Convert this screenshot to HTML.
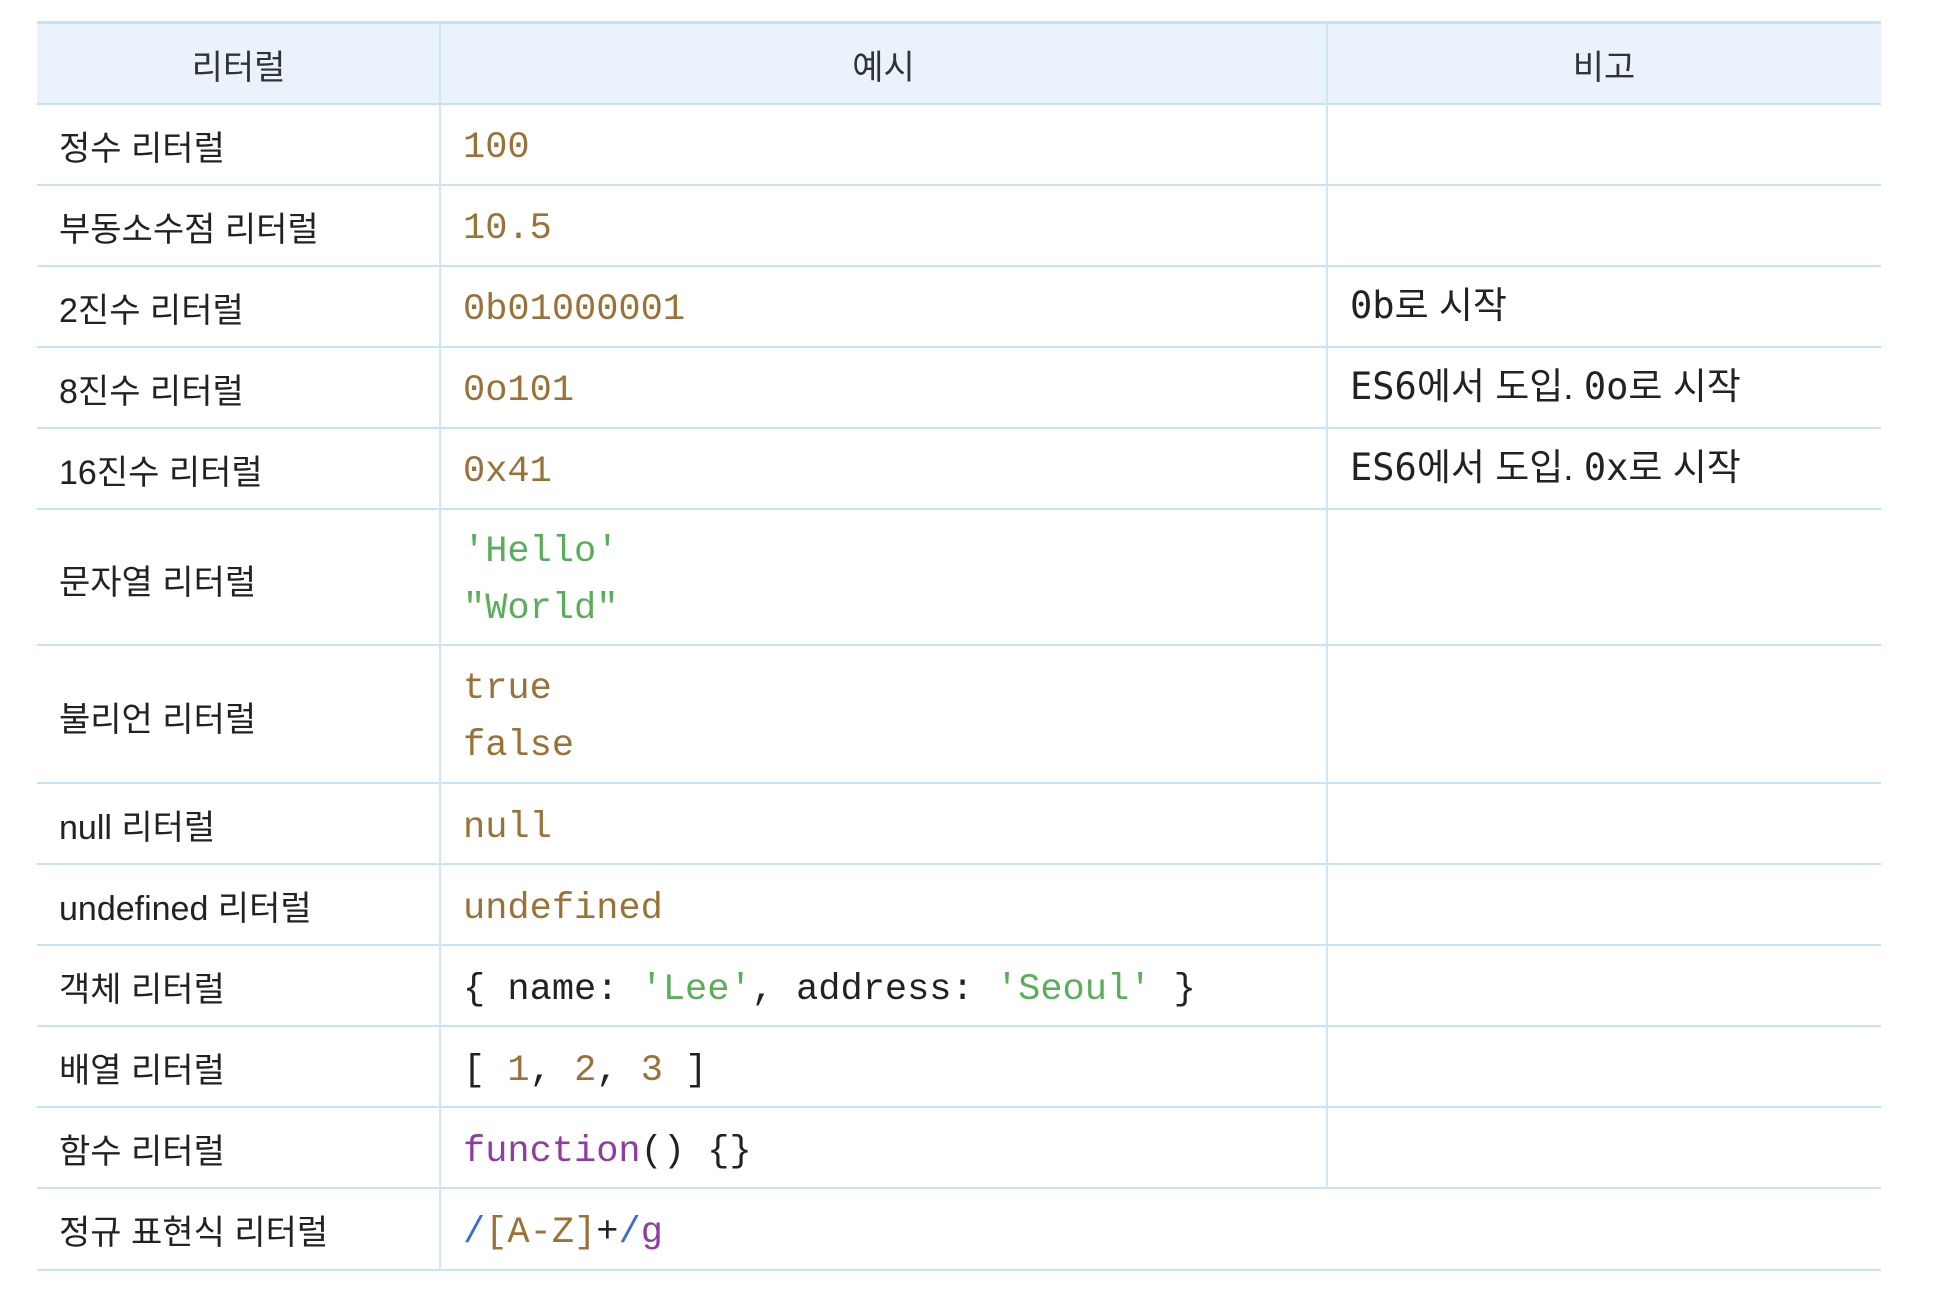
<!DOCTYPE html>
<html><head><meta charset="utf-8"><style>
html,body{margin:0;padding:0;background:#fff;width:1951px;height:1306px;overflow:hidden}
.t{position:absolute;left:37px;top:22px;width:1844px}
.line{position:absolute;left:0;width:1844px;height:2px;background:#c4e3f5}
.v{position:absolute;width:2px;background:#cde7f6}
.c{position:absolute;font-family:"Liberation Sans","Noto Sans CJK KR",sans-serif;font-size:34px;color:#222;white-space:pre;line-height:1.2}
.m{font-family:"Liberation Mono","DejaVu Sans Mono",monospace;font-size:37px}
.n{color:#9a7238}.s{color:#5aad5a}.p{color:#8e3ca0}.b{color:#3c6ecc}.k{color:#222}
.hd{position:absolute;font-family:"Liberation Sans","Noto Sans CJK KR",sans-serif;font-size:34px;color:#333;text-align:center;line-height:1.2}
.r3{font-size:37px}
.dm{font-family:"DejaVu Sans Mono",monospace}
</style></head><body>
<div class="t">
<div style="position:absolute;left:0;top:0;width:1844px;height:82px;background:#eaf3fc"></div>
<div class="line" style="top:-1px;height:3px"></div>
<div class="line" style="top:81px"></div>
<div class="line" style="top:162px"></div>
<div class="line" style="top:243px"></div>
<div class="line" style="top:324px"></div>
<div class="line" style="top:405px"></div>
<div class="line" style="top:486px"></div>
<div class="line" style="top:622px"></div>
<div class="line" style="top:760px"></div>
<div class="line" style="top:841px"></div>
<div class="line" style="top:922px"></div>
<div class="line" style="top:1003px"></div>
<div class="line" style="top:1084px"></div>
<div class="line" style="top:1165px"></div>
<div class="line" style="top:1247px"></div>
<div class="v" style="left:402px;top:0;height:1249px"></div>
<div class="v" style="left:1289px;top:0;height:1167px"></div>

<div class="hd" style="left:0;width:403px;top:26px">리터럴</div>
<div class="hd" style="left:403px;width:887px;top:26px">예시</div>
<div class="hd" style="left:1290px;width:554px;top:26px">비고</div>

<div class="c" style="left:22px;top:107px">정수 리터럴</div>
<div class="c m n" style="left:426px;top:104px">100</div>
<div class="c" style="left:22px;top:188px">부동소수점 리터럴</div>
<div class="c m n" style="left:426px;top:185px">10.5</div>
<div class="c" style="left:22px;top:269px">2진수 리터럴</div>
<div class="c m n" style="left:426px;top:266px">0b01000001</div>
<div class="c r3" style="left:1313px;top:262px"><span class="dm">0b</span>로 시작</div>
<div class="c" style="left:22px;top:350px">8진수 리터럴</div>
<div class="c m n" style="left:426px;top:347px">0o101</div>
<div class="c r3" style="left:1313px;top:343px"><span class="dm">ES6</span>에서 도입. <span class="dm">0o</span>로 시작</div>
<div class="c" style="left:22px;top:431px">16진수 리터럴</div>
<div class="c m n" style="left:426px;top:428px">0x41</div>
<div class="c r3" style="left:1313px;top:424px"><span class="dm">ES6</span>에서 도입. <span class="dm">0x</span>로 시작</div>
<div class="c" style="left:22px;top:541px">문자열 리터럴</div>
<div class="c m s" style="left:426px;top:508px">'Hello'</div>
<div class="c m s" style="left:426px;top:565px">"World"</div>
<div class="c" style="left:22px;top:678px">불리언 리터럴</div>
<div class="c m n" style="left:426px;top:645px">true</div>
<div class="c m n" style="left:426px;top:702px">false</div>
<div class="c" style="left:22px;top:786px">null 리터럴</div>
<div class="c m n" style="left:426px;top:784px">null</div>
<div class="c" style="left:22px;top:867px">undefined 리터럴</div>
<div class="c m n" style="left:426px;top:865px">undefined</div>
<div class="c" style="left:22px;top:948px">객체 리터럴</div>
<div class="c m k" style="left:426px;top:946px">{ name: <span class="s">'Lee'</span>, address: <span class="s">'Seoul'</span> }</div>
<div class="c" style="left:22px;top:1029px">배열 리터럴</div>
<div class="c m k" style="left:426px;top:1027px">[ <span class="n">1</span>, <span class="n">2</span>, <span class="n">3</span> ]</div>
<div class="c" style="left:22px;top:1110px">함수 리터럴</div>
<div class="c m k" style="left:426px;top:1108px"><span class="p">function</span>() {}</div>
<div class="c" style="left:22px;top:1191px">정규 표현식 리터럴</div>
<div class="c m k" style="left:426px;top:1189px"><span class="b">/</span><span class="n">[A-Z]</span>+<span class="b">/</span><span class="p">g</span></div>
</div>
</body></html>
